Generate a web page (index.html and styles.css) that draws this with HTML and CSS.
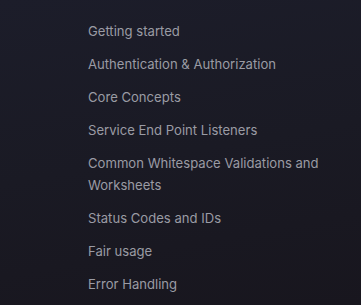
FILE: index.html
```html
<!DOCTYPE html>
<html lang="en">
<head>
    <meta charset="UTF-8">
    <meta name="viewport" content="width=device-width, initial-scale=1.0">
    <title>Docs</title>
    <link rel="stylesheet" href="styles.css">
</head>
<body>
    <!-- sidebar navigation -->
    <nav class="sidebar">
        <ul class="nav-list">
            <li><a href="#">Getting started</a></li>
            <li><a href="#">Authentication &amp; Authorization</a></li>
            <li><a href="#">Core Concepts</a></li>
            <li><a href="#">Service End Point Listeners</a></li>
            <li><a href="#">Common Whitespace Validations and Worksheets</a></li>
            <li><a href="#">Status Codes and IDs</a></li>
            <li><a href="#">Fair usage</a></li>
            <li><a href="#">Error Handling</a></li>
        </ul>
    </nav>
</body>
</html>
```

FILE: styles.css
```css
html, body {
    height: 100%;
}

body {
    margin: 0;
    font-family: Inter, "Noto Sans", sans-serif;
    background: linear-gradient(170deg, #1c1d2a 0%, #1a1a24 50%, #18161e 100%);
    overflow: hidden;
}

.sidebar {
    padding: 20px 0 0 88px;
}

.nav-list {
    list-style: none;
    margin: 0;
    padding: 0;
    width: 236px;
    display: flex;
    flex-direction: column;
    gap: 11px;
}

.nav-list a {
    display: block;
    color: #9a9ba4;
    font-size: 13.1px;
    line-height: 22px;
    text-decoration: none;
}
```
